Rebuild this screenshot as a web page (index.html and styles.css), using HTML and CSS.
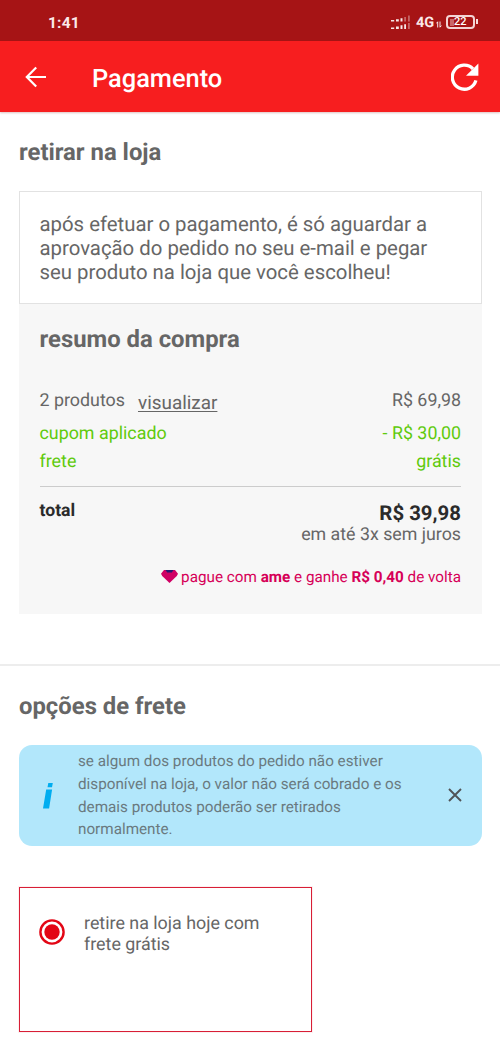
FILE: index.html
```html
<!DOCTYPE html>
<html lang="pt-BR">
<head>
<meta charset="utf-8">
<title>Pagamento</title>
<link rel="stylesheet" href="styles.css">
</head>
<body>
<div class="status">
  <span class="clock">1:41</span>
  <svg class="signal" width="20" height="16" viewBox="0 0 20 16" fill="#fff">
    <path d="M0 5h3.2v1.500H0zM5 4.200h2.800v2.300H5zM9.500 3.200h2v3.300h-2zM0 12.400h3.200V14H0zM5 11.600h2.800V14H5zM9.500 10.300h2V14h-2zM13.200 9.200h1.800V14h-1.800z" opacity=".9"/>
    <path d="M13.200 2h1.800v4.500h-1.800zM17 .5h1.800v6H17zM17 8h1.800v6H17z" opacity=".35"/>
  </svg>
  <span class="net">4G</span>
  <svg class="data" width="6" height="7" viewBox="0 0 6 7" fill="none" stroke="#fff" stroke-width=".9"><path d="M1.700 6.500V.8L.4 2.400M4 .5v5.700l1.400-1.600"/></svg>
  <span class="battery"><span class="charge"></span><span class="level">22</span></span><span class="cap"></span>
</div>
<header class="bar">
  <svg class="back" width="22" height="22" viewBox="0 0 22 22" fill="none" stroke="#fff" stroke-width="2.200"><path d="M21 11H2M11.200 1.500L1.800 11l9.400 9.500"/></svg>
  <h1 class="bar-title">Pagamento</h1>
  <svg class="reload" width="28" height="28" viewBox="0 0 28 28"><path d="M24.900 17.400A12 12 0 1 1 22 5.900" fill="none" stroke="#fff" stroke-width="3.300"/><path d="M27.400.4v12.400H15z" fill="#fff"/></svg>
</header>
<main>
  <section class="pickup">
    <h2 class="heading">retirar na loja</h2>
    <p class="notice">após efetuar o pagamento, é só aguardar a<br>aprovação do pedido no seu e-mail e pegar<br>seu produto na loja que você escolheu!</p>
    <div class="summary">
      <h2 class="heading summary-title">resumo da compra</h2>
      <div class="row products"><span class="count">2 produtos</span><a class="view">visualizar</a><span class="amount">R$ 69,98</span></div>
      <div class="row green coupon"><span>cupom aplicado</span><span class="amount">- R$ 30,00</span></div>
      <div class="row green shipping"><span>frete</span><span class="amount">grátis</span></div>
      <div class="total"><span class="total-label">total</span><div class="total-values"><strong class="price">R$ 39,98</strong><span class="parcel">em até 3x sem juros</span></div></div>
      <div class="ame"><svg class="gem" width="17" height="13" viewBox="0 0 17 13"><path d="M3 0h11l3 3.800L15.800 6 8.500 13 1.200 6 0 3.800z" fill="#d00064"/><path d="M4.500 0h8L10.800 2.600H6.200z" fill="#281a72"/></svg><span class="ame-text">pague com <b>ame</b> e ganhe <b>R$ 0,40</b> de volta</span></div>
    </div>
  </section>
  <section class="freight">
    <h2 class="heading">opções de frete</h2>
    <div class="info">
      <svg class="info-icon" width="10" height="26" viewBox="0 0 10 26" fill="#00adf0"><path d="M5.300 0H9.800l-.8 4.300H4.500zM3.200 6.500h5.900L6.100 25.500H0z"/></svg>
      <p class="info-text">se algum dos produtos do pedido não estiver<br>disponível na loja, o valor não será cobrado e os<br>demais produtos poderão ser retirados<br>normalmente.</p>
      <svg class="close" width="14" height="14" viewBox="0 0 14 14" stroke="#505356" stroke-width="1.900"><path d="M1 1l12 12M13 1L1 13"/></svg>
    </div>
    <div class="freight-card">
      <svg class="radio" width="26" height="26" viewBox="0 0 26 26"><circle cx="13" cy="13" r="11.600" fill="none" stroke="#e30615" stroke-width="2.400"/><circle cx="13" cy="13" r="7.700" fill="#e30615"/></svg>
      <span class="freight-label">retire na loja hoje com<br>frete grátis</span>
    </div>
  </section>
</main>
</body>
</html>
```
FILE: styles.css
```css
* { box-sizing: border-box; }
body { margin: 0; width: 500px; height: 1056px; overflow: hidden; background: #fff; color: #666; font-family: Roboto, "Liberation Sans", sans-serif; text-rendering: geometricPrecision; }
h1, h2, p { margin: 0; }
svg { display: block; flex: none; }
span, a, p, h1, h2, strong { white-space: nowrap; }
.status { display: flex; align-items: flex-start; height: 41px; background: #a61415; color: #fff; }
.clock { margin: 13px 0 0 48px; width: 343px; font-size: 15.500px; line-height: 20px; font-weight: 700; letter-spacing: .2px; color: #fbe9e9; }
.signal { margin-top: 15px; }
.net { margin: 13px 0 0 5px; width: 19px; font-size: 14.500px; line-height: 20px; font-weight: 700; color: #fbe9e9; }
.data { margin: 21px 0 0 1px; }
.battery { display: flex; align-items: center; margin: 15px 0 0 4px; width: 29px; height: 14px; padding-left: 2px; border: 2px solid #f3d4d4; border-radius: 4px; }
.charge { width: 4px; height: 7px; background: #c96768; }
.level { font-size: 11px; line-height: 12px; font-weight: 500; }
.cap { width: 2px; height: 5px; margin: 19px 0 0 1px; background: #f7dede; }
.bar { display: flex; align-items: center; height: 71px; padding: 0 21px 0 25px; background: #f71e1f; box-shadow: 0 1px 2px rgba(120, 0, 0, .25); }
.bar-title { margin: 5px auto 0 45px; font-size: 25.400px; line-height: 30px; font-weight: 500; color: #fff; }
.pickup { height: 554px; padding: 25px 18px 0 19px; border-bottom: 2px solid #ededed; }
.heading { font-size: 23.850px; line-height: 31px; font-weight: 700; color: #666; }
.notice { height: 113px; margin-top: 23px; padding: 20px 19.500px 0; border: 1px solid #e2e2e2; font-size: 20.350px; line-height: 24px; }
.summary { height: 310px; padding: 20px 21px 0 20.500px; background: #f7f7f7; }
.row { display: flex; font-size: 17.850px; line-height: 24px; }
.amount { margin-left: auto; }
.products { margin-top: 34px; }
.view { margin: 2px 0 0 13px; font-size: 18.900px; text-decoration: underline; text-underline-offset: 2px; text-decoration-thickness: 1px; }
.coupon { margin-top: 7px; }
.shipping { margin-top: 4px; }
.green { color: #5fca0c; }
.total { display: flex; justify-content: space-between; margin-top: 12px; padding-top: 11px; border-top: 1px solid #ccc; }
.total-label { margin-top: 1px; font-size: 17.600px; line-height: 25px; font-weight: 700; color: #2b2b2b; }
.total-values { display: flex; flex-direction: column; align-items: flex-end; padding-top: 3px; }
.price { font-size: 20.400px; line-height: 24px; color: #2b2b2b; }
.parcel { margin-top: -1px; font-size: 17.800px; line-height: 22px; }
.ame { display: flex; justify-content: flex-end; margin-top: 21px; color: #d60057; font-size: 15.250px; line-height: 20px; }
.gem { margin: 3px 3px 0 0; }
.freight { padding: 25px 18px 0 19px; }
.info { display: flex; align-items: center; height: 101px; margin-top: 23px; padding: 0 20px 0 24px; border-radius: 13px; background: #b2e7fb; }
.info-text { margin: 0 auto 0 25px; font-size: 15.250px; line-height: 22.700px; color: #6a7a80; }
.close { margin-top: -2px; }
.freight-card { display: flex; align-items: flex-start; width: 293px; height: 145px; margin-top: 41px; padding: 25px 18px; border: 1px solid #d81e36; outline: 1px solid rgba(227, 6, 21, .06); }
.radio { margin: 6px 0 0 1px; }
.freight-label { margin-left: 19px; font-size: 17.850px; line-height: 21px; }
```
